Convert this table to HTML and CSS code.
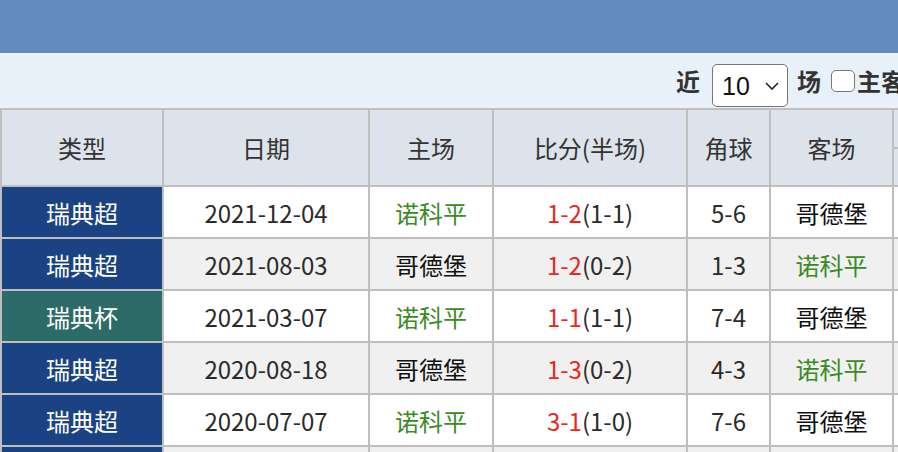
FILE: index.html
```html
<!DOCTYPE html>
<html lang="zh-CN">
<head>
  <meta charset="UTF-8">
  <title>交战历史</title>
  <link rel="stylesheet" href="styles.css">
</head>
<body>
  <div class="page">
    <div class="titlebar"></div>
    <div class="filter">
      <span class="filter-label">近</span>
      <span class="select-wrap">
        <select class="count">
          <option>6</option>
          <option selected>10</option>
          <option>20</option>
        </select>
        <svg class="chevron" width="14" height="8" viewBox="0 0 14 8">
          <path d="M1 1 L7 7 L13 1" fill="none" stroke="#222" stroke-width="1.6"/>
        </svg>
      </span>
      <span class="filter-label">场</span>
      <input type="checkbox" class="check">
      <span class="filter-label">主客相同</span>
    </div>

    <table class="history">
      <thead>
        <tr>
          <th rowspan="2" class="c-type">类型</th>
          <th rowspan="2" class="c-date">日期</th>
          <th rowspan="2" class="c-team">主场</th>
          <th rowspan="2" class="c-score">比分(半场)</th>
          <th rowspan="2" class="c-corner">角球</th>
          <th rowspan="2" class="c-away">客场</th>
          <th colspan="3" class="c-group">盘路</th>
        </tr>
        <tr>
          <th class="c-sub">让球</th>
          <th class="c-sub">结果</th>
          <th class="c-sub">大小</th>
        </tr>
      </thead>
      <tbody>
        <tr>
          <td class="league">瑞典超</td>
          <td>2021-12-04</td>
          <td class="home">诺科平</td>
          <td><span class="ft">1-2</span>(1-1)</td>
          <td>5-6</td>
          <td class="team">哥德堡</td>
          <td></td><td></td><td></td>
        </tr>
        <tr class="alt">
          <td class="league">瑞典超</td>
          <td>2021-08-03</td>
          <td class="team">哥德堡</td>
          <td><span class="ft">1-2</span>(0-2)</td>
          <td>1-3</td>
          <td class="home">诺科平</td>
          <td></td><td></td><td></td>
        </tr>
        <tr>
          <td class="league cup">瑞典杯</td>
          <td>2021-03-07</td>
          <td class="home">诺科平</td>
          <td><span class="ft">1-1</span>(1-1)</td>
          <td>7-4</td>
          <td class="team">哥德堡</td>
          <td></td><td></td><td></td>
        </tr>
        <tr class="alt">
          <td class="league">瑞典超</td>
          <td>2020-08-18</td>
          <td class="team">哥德堡</td>
          <td><span class="ft">1-3</span>(0-2)</td>
          <td>4-3</td>
          <td class="home">诺科平</td>
          <td></td><td></td><td></td>
        </tr>
        <tr>
          <td class="league">瑞典超</td>
          <td>2020-07-07</td>
          <td class="home">诺科平</td>
          <td><span class="ft">3-1</span>(1-0)</td>
          <td>7-6</td>
          <td class="team">哥德堡</td>
          <td></td><td></td><td></td>
        </tr>
        <tr class="alt">
          <td class="league">瑞典超</td>
          <td>2019-10-05</td>
          <td class="team">哥德堡</td>
          <td><span class="ft">2-0</span>(1-0)</td>
          <td>6-2</td>
          <td class="home">诺科平</td>
          <td></td><td></td><td></td>
        </tr>
      </tbody>
    </table>
  </div>
</body>
</html>
```

FILE: styles.css
```css
* {
  box-sizing: border-box;
}
html, body {
  margin: 0;
  overflow: hidden;
}
body {
  font-family: "Noto Sans CJK SC", "Noto Sans", sans-serif;
  color: #333;
  background: #fff;
}
.page {
  width: 1200px;
}
.titlebar {
  height: 53px;
  background: #628cbf;
}
.filter {
  height: 55px;
  background: #e8f0fa;
  display: flex;
  align-items: center;
  padding-left: 676px;
  font-size: 24px;
}
.filter-label {
  font-weight: bold;
  color: #333;
}
.select-wrap {
  position: relative;
  margin: 10px 9px 0 12px;
}
.count {
  appearance: none;
  -webkit-appearance: none;
  width: 76px;
  height: 43px;
  border: 1px solid #767676;
  border-radius: 5px;
  background: #fff;
  font-family: "Liberation Sans", sans-serif;
  font-size: 25px;
  color: #111;
  padding: 0 0 0 9px;
}
.chevron {
  position: absolute;
  right: 9px;
  top: 18px;
  pointer-events: none;
}
.check {
  appearance: none;
  -webkit-appearance: none;
  width: 24px;
  height: 22px;
  margin: 0 2px 0 10px;
  border: 1.5px solid #777;
  border-radius: 5px;
  background: #fff;
}
.history {
  border-collapse: separate;
  border-spacing: 0;
  table-layout: fixed;
  border-top: 2px solid #bfbfbf;
  border-left: 2px solid #bfbfbf;
  font-size: 24px;
}
.history th,
.history td {
  border-right: 2px solid #bfbfbf;
  border-bottom: 2px solid #bfbfbf;
  text-align: center;
  padding: 0;
  white-space: nowrap;
}
.history th {
  background: #dde3eb;
  font-weight: normal;
  color: #333;
  height: 39px;
}
.history th.c-sub {
  height: 38px;
}
.c-type { width: 162px; }
.c-date { width: 206px; }
.c-team { width: 124px; }
.c-score { width: 194px; }
.c-corner { width: 83px; }
.c-away { width: 123px; }
.c-group { width: 300px; }
.history td {
  height: 52px;
  background: #fff;
  color: #2b2b2b;
}
.history tr.alt td {
  background: #f0f0f0;
}
.history tr td.league {
  background: #1b4384;
  color: #fff;
}
.history tr td.cup {
  background: #2d6b68;
}
.history td.home {
  color: #3a8a26;
}
.history td.team {
  color: #111;
}
.ft {
  color: #e8261e;
}
```
